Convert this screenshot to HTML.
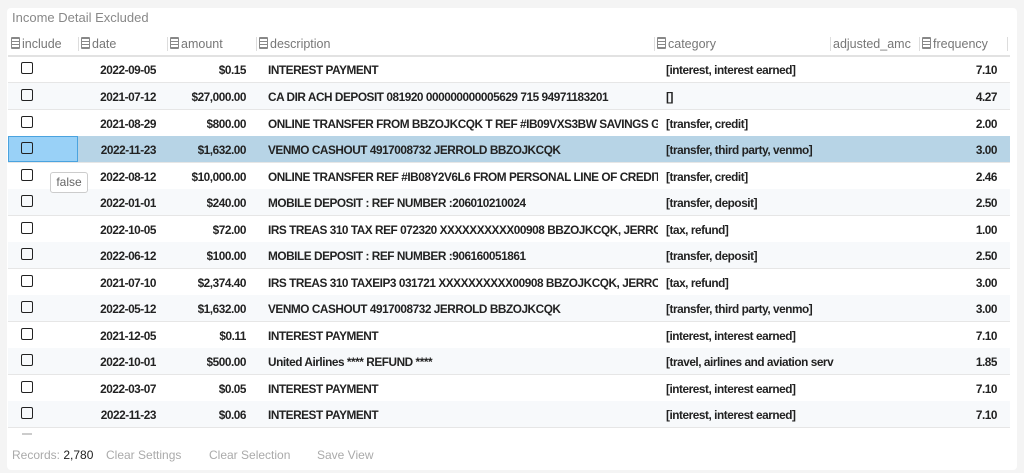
<!DOCTYPE html>
<html><head><style>
body{margin:0;background:#f4f4f4;font-family:"Liberation Sans",sans-serif;width:1024px;height:473px;overflow:hidden;position:relative}
.panel{position:absolute;left:7px;top:8px;width:1010px;height:462px;background:#fff;border-radius:4px}
.title{position:absolute;left:12px;top:10px;font-size:13px;color:#888}
.hdr{position:absolute;left:8px;top:33px;width:1002px;height:22px;border-bottom:2px solid #e2e2e2;font-size:12.5px;color:#777}
.hdr span{position:absolute;top:4px}
.ic{display:inline-block;width:7px;height:10px;border:1px solid #888;border-radius:1px;margin-right:2px;vertical-align:-1px;background:repeating-linear-gradient(#888 0 1px,transparent 1px 3px)}
.sep{position:absolute;top:4px;width:1px;height:14px;background:#ddd}
.row{position:absolute;left:8px;width:1002px;height:26px;border-bottom:1px solid #e6e6e6;font-size:11.8px;font-weight:bold;letter-spacing:-0.45px;color:#222}
.row.alt{background:#f7f9fb}
.row.sel{background:#b7d4e6}
.row span{position:absolute;top:7px;white-space:nowrap;overflow:hidden}
.cb{position:absolute;left:13px;top:6px;width:10px;height:10px;border:1.8px solid #222;border-radius:2px}
.d{right:854px}.a{right:764px}.de{left:260px;width:390px}.c{left:658px;width:170px}.f{right:13px}
.foot{position:absolute;top:448px;font-size:12px;color:#aaa}
</style></head><body>
<div class="panel"></div>
<div class="title">Income Detail Excluded</div>
<div class="hdr">
<span style="left:3px"><i class="ic"></i>include</span><div class="sep" style="left:70px"></div>
<span style="left:73px"><i class="ic"></i>date</span><div class="sep" style="left:159px"></div>
<span style="left:162px"><i class="ic"></i>amount</span><div class="sep" style="left:248px"></div>
<span style="left:251px"><i class="ic"></i>description</span><div class="sep" style="left:646px"></div>
<span style="left:649px"><i class="ic"></i>category</span><div class="sep" style="left:822px"></div>
<span style="left:825px">adjusted_amc</span><div class="sep" style="left:911px"></div>
<span style="left:914px"><i class="ic"></i>frequency</span><div class="sep" style="left:999px"></div>
</div>
<div class="row" style="top:56px"><i class="cb"></i><span class="d">2022-09-05</span><span class="a">$0.15</span><span class="de">INTEREST PAYMENT</span><span class="c">[interest, interest earned]</span><span class="f">7.10</span></div>
<div class="row alt" style="top:83px"><i class="cb"></i><span class="d">2021-07-12</span><span class="a">$27,000.00</span><span class="de">CA DIR ACH DEPOSIT 081920 000000000005629 715 94971183201</span><span class="c">[]</span><span class="f">4.27</span></div>
<div class="row" style="top:110px"><i class="cb"></i><span class="d">2021-08-29</span><span class="a">$800.00</span><span class="de">ONLINE TRANSFER FROM BBZOJKCQK T REF #IB09VXS3BW SAVINGS GRA</span><span class="c">[transfer, credit]</span><span class="f">2.00</span></div>
<div class="row sel" style="top:136px"><div style="position:absolute;left:0;top:0;width:68px;height:24px;background:#99d1f7;border:1px solid #4aa3df"></div><i class="cb"></i><span class="d">2022-11-23</span><span class="a">$1,632.00</span><span class="de">VENMO CASHOUT 4917008732 JERROLD BBZOJKCQK</span><span class="c">[transfer, third party, venmo]</span><span class="f">3.00</span></div>
<div class="row" style="top:163px"><i class="cb"></i><span class="d">2022-08-12</span><span class="a">$10,000.00</span><span class="de">ONLINE TRANSFER REF #IB08Y2V6L6 FROM PERSONAL LINE OF CREDIT XX</span><span class="c">[transfer, credit]</span><span class="f">2.46</span></div>
<div class="row alt" style="top:189px"><i class="cb"></i><span class="d">2022-01-01</span><span class="a">$240.00</span><span class="de">MOBILE DEPOSIT : REF NUMBER :206010210024</span><span class="c">[transfer, deposit]</span><span class="f">2.50</span></div>
<div class="row" style="top:216px"><i class="cb"></i><span class="d">2022-10-05</span><span class="a">$72.00</span><span class="de">IRS TREAS 310 TAX REF 072320 XXXXXXXXXX00908 BBZOJKCQK, JERROLD</span><span class="c">[tax, refund]</span><span class="f">1.00</span></div>
<div class="row alt" style="top:242px"><i class="cb"></i><span class="d">2022-06-12</span><span class="a">$100.00</span><span class="de">MOBILE DEPOSIT : REF NUMBER :906160051861</span><span class="c">[transfer, deposit]</span><span class="f">2.50</span></div>
<div class="row" style="top:269px"><i class="cb"></i><span class="d">2021-07-10</span><span class="a">$2,374.40</span><span class="de">IRS TREAS 310 TAXEIP3 031721 XXXXXXXXXX00908 BBZOJKCQK, JERROLD</span><span class="c">[tax, refund]</span><span class="f">3.00</span></div>
<div class="row alt" style="top:295px"><i class="cb"></i><span class="d">2022-05-12</span><span class="a">$1,632.00</span><span class="de">VENMO CASHOUT 4917008732 JERROLD BBZOJKCQK</span><span class="c">[transfer, third party, venmo]</span><span class="f">3.00</span></div>
<div class="row" style="top:322px"><i class="cb"></i><span class="d">2021-12-05</span><span class="a">$0.11</span><span class="de">INTEREST PAYMENT</span><span class="c">[interest, interest earned]</span><span class="f">7.10</span></div>
<div class="row alt" style="top:348px"><i class="cb"></i><span class="d">2022-10-01</span><span class="a">$500.00</span><span class="de">United Airlines **** REFUND ****</span><span class="c">[travel, airlines and aviation serv</span><span class="f">1.85</span></div>
<div class="row" style="top:375px"><i class="cb"></i><span class="d">2022-03-07</span><span class="a">$0.05</span><span class="de">INTEREST PAYMENT</span><span class="c">[interest, interest earned]</span><span class="f">7.10</span></div>
<div class="row alt" style="top:401px"><i class="cb"></i><span class="d">2022-11-23</span><span class="a">$0.06</span><span class="de">INTEREST PAYMENT</span><span class="c">[interest, interest earned]</span><span class="f">7.10</span></div>
<div style="position:absolute;left:22px;top:433px;width:10px;height:2px;background:#ccc"></div>
<div style="position:absolute;left:50px;top:172px;width:36px;height:19px;border:1px solid #ccc;border-radius:3px;background:#fff;font-size:12px;color:#666;text-align:center;line-height:19px">false</div>
<div class="foot" style="left:12px">Records: <span style="color:#222">2,780</span></div>
<div class="foot" style="left:106px">Clear Settings</div>
<div class="foot" style="left:209px">Clear Selection</div>
<div class="foot" style="left:317px">Save View</div>
</body></html>
